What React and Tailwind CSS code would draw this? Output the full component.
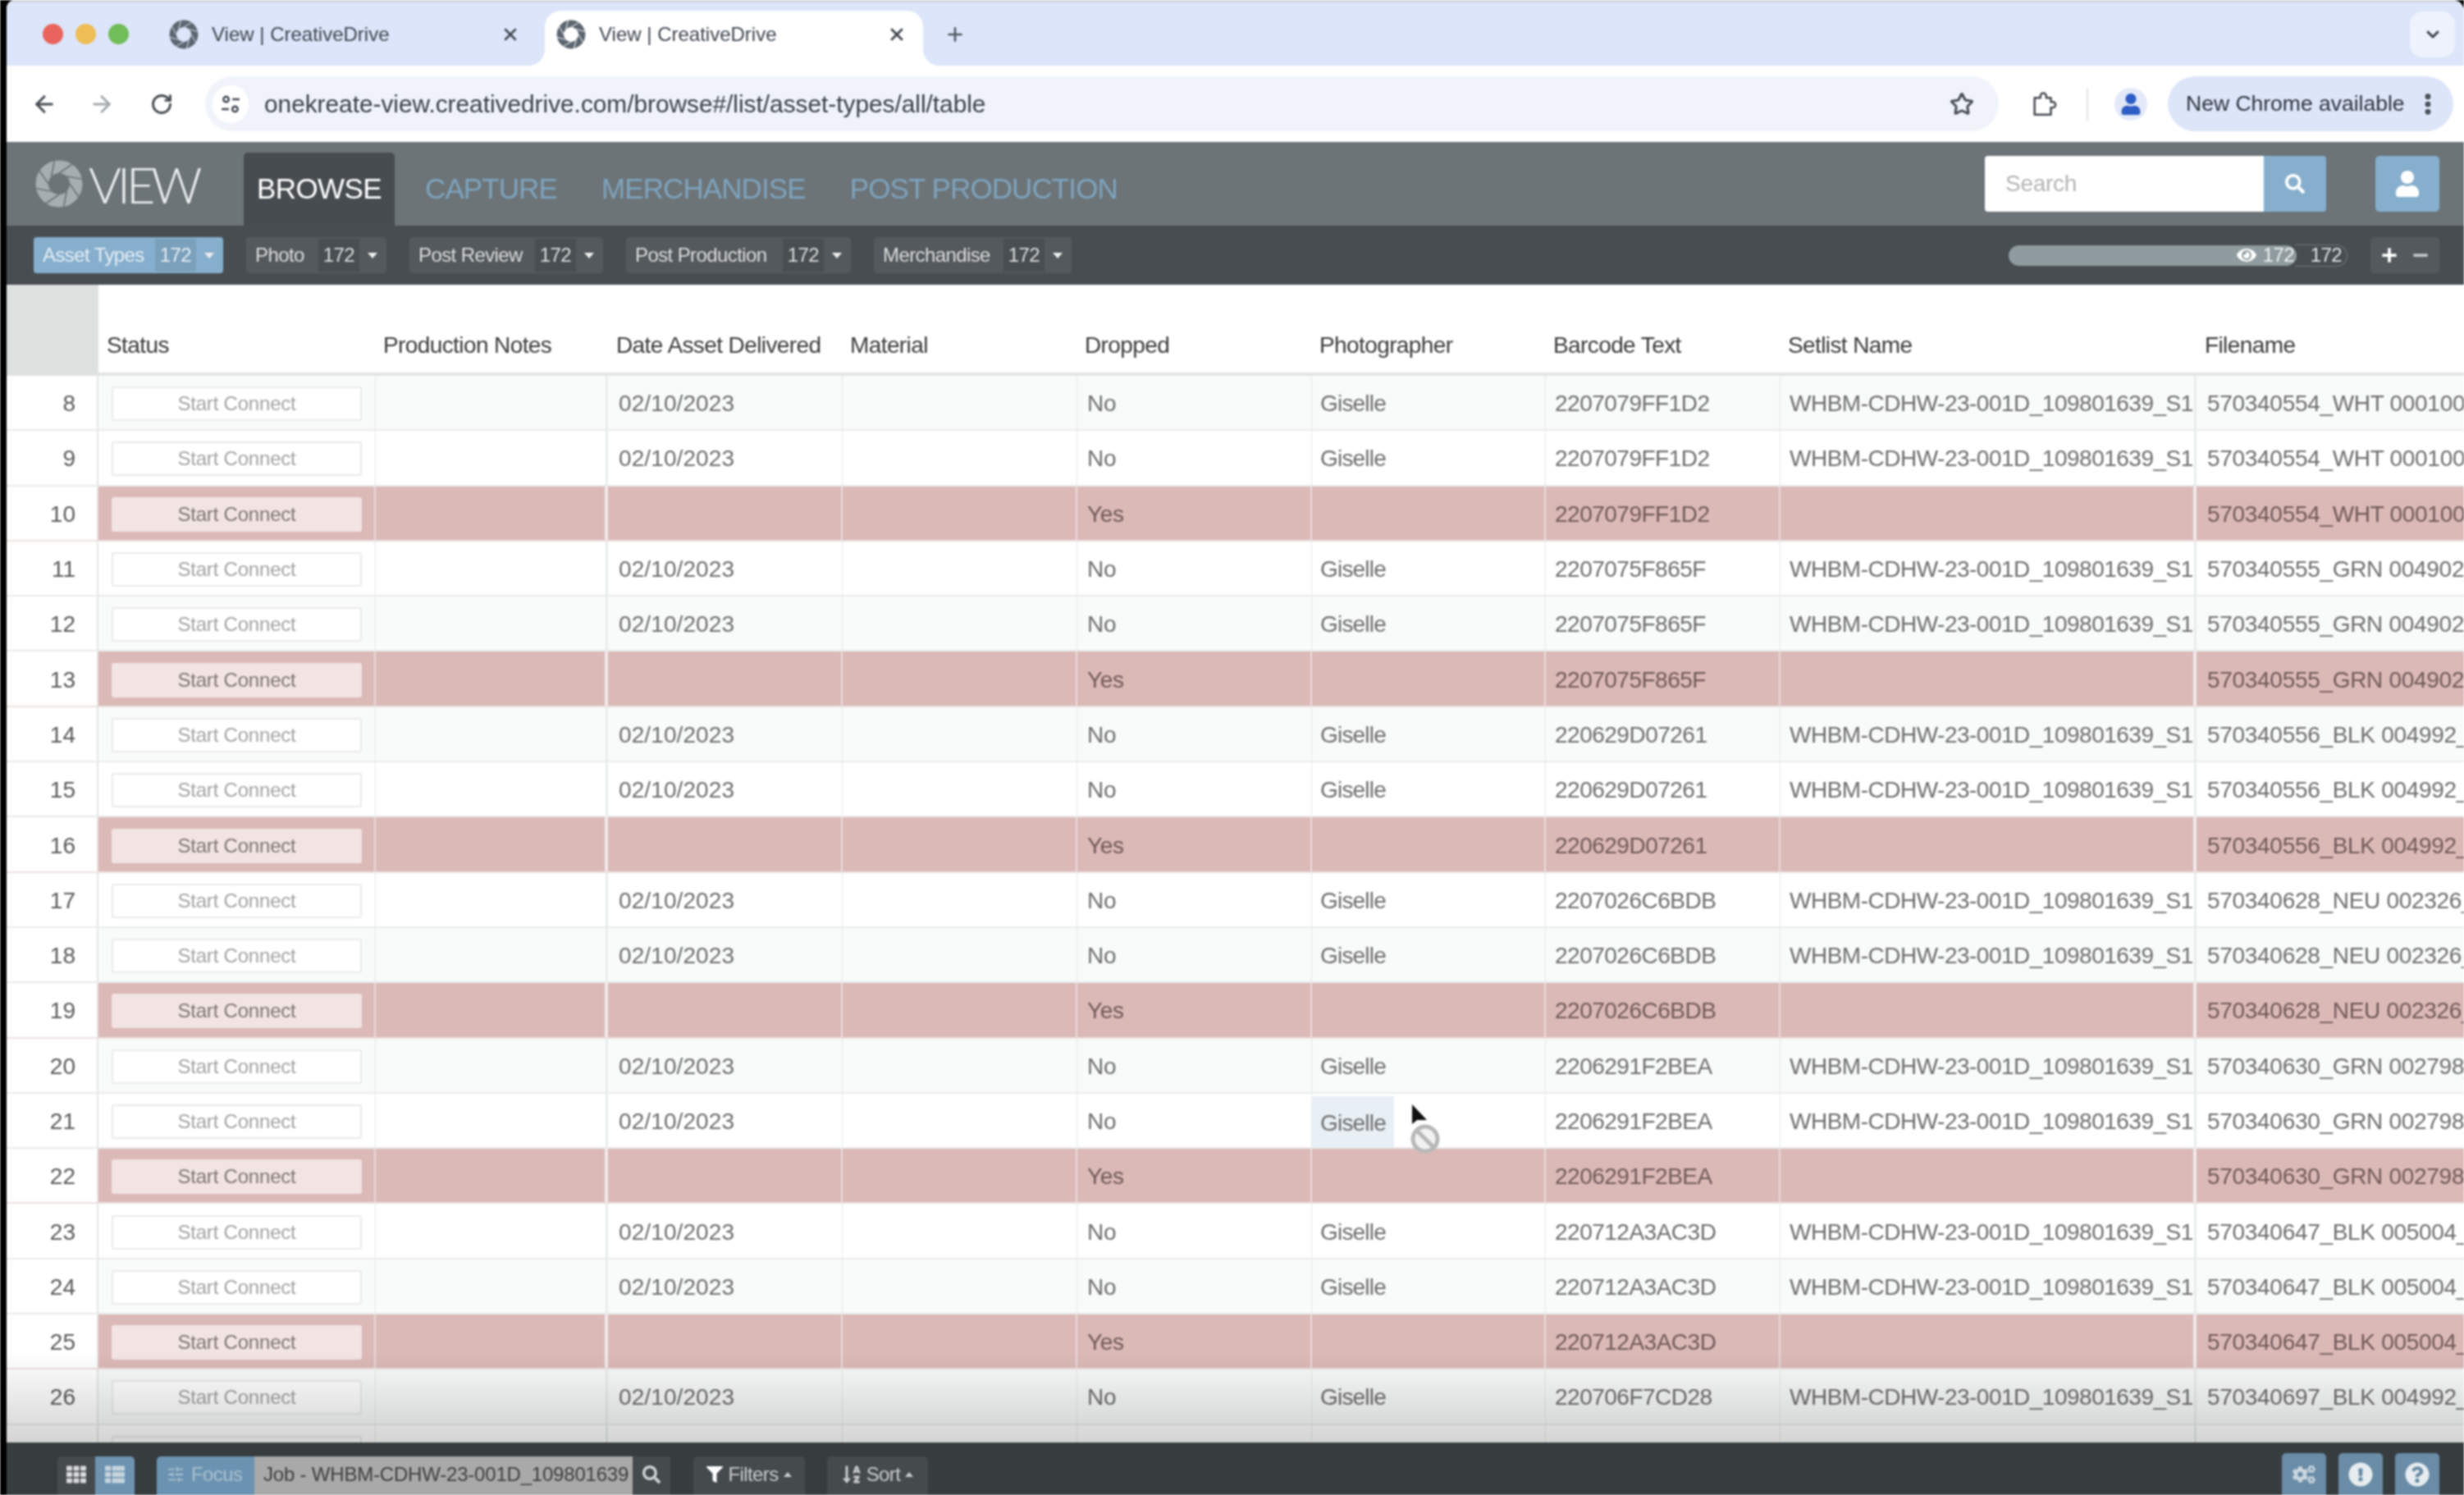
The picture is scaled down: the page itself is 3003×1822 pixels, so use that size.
import React from "react";
import { ArrowLeft, ArrowRight, RotateCw, Star, MoreVertical, ChevronDown, X, Plus, SlidersHorizontal } from "lucide-react";
import { FaUser, FaSearch, FaFilter, FaThList, FaTh, FaEye, FaSortAlphaDown, FaCogs, FaExclamationCircle, FaQuestionCircle, FaPlus, FaMinus } from "react-icons/fa";

const groups = [
  ["2207079FF1D2", "570340554_WHT 000100_"],
  ["2207075F865F", "570340555_GRN 004902_"],
  ["220629D07261", "570340556_BLK 004992_"],
  ["2207026C6BDB", "570340628_NEU 002326_"],
  ["2206291F2BEA", "570340630_GRN 002798_"],
  ["220712A3AC3D", "570340647_BLK 005004_"],
  ["220706F7CD28", "570340697_BLK 004992_"],
];
const rows = [];
for (let n = 8; n <= 27; n++) {
  const g = groups[Math.floor((n - 8) / 3)];
  rows.push({ n, red: (n - 10) % 3 === 0, code: g[0], file: g[1] });
}
const setlist = "WHBM-CDHW-23-001D_109801639_S1";
const gridCols = "grid grid-cols-[112px_338px_283px_286px_286px_286px_285px_286px_507px_326px]";

function Aperture({ size, color, line, r, sw }) {
  const blades = [0, 45, 90, 135, 180, 225, 270, 315];
  const inner = r - sw / 2;
  const outer = r + sw / 2;
  const x2 = 30 + outer * 0.55;
  const y2 = 30 - outer * 0.835;
  return (
    <svg width={size} height={size} viewBox="0 0 60 60" fill="none" className="shrink-0">
      <circle cx="30" cy="30" r={r} stroke={color} strokeWidth={sw} />
      {blades.map((a) => (
        <line key={a} x1="30" y1={30 - inner} x2={x2} y2={y2} stroke={line} strokeWidth="1.6" transform={`rotate(${a} 30 30)`} />
      ))}
    </svg>
  );
}

function Caret({ up, color = "border-t-[#e0e0e0]" }) {
  return up ? (
    <span className="w-0 h-0 border-x-[5px] border-x-transparent border-b-[6px] border-b-[#c9cccd]" />
  ) : (
    <span className={`w-0 h-0 border-x-[6px] border-x-transparent border-t-[7px] ${color}`} />
  );
}

function Chip({ label, count, w, active }) {
  return (
    <div className={`${w} h-[44px] rounded-[4px] flex items-center pl-[11px] pr-[11px] text-[24px] tracking-[-0.6px] ${active ? "bg-[#86afcd] text-[#e4eef5]" : "bg-[#53595d] text-[#dcdcdc]"}`}>
      <span className="whitespace-nowrap">{label}</span>
      <span className={`ml-auto h-[40px] px-[6px] flex items-center ${active ? "bg-[#7ba0bb]" : "bg-[#484e52]"}`}>{count}</span>
      <span className="ml-[10px] flex"><Caret color="border-t-[#eeeeee]" /></span>
    </div>
  );
}

function Cell({ children, cls = "" }) {
  return <div className={`h-full flex items-center overflow-hidden whitespace-nowrap pt-[3px] ${cls}`}>{children}</div>;
}

function Row({ r }) {
  const bg = r.red ? "bg-[#dbb9b7] text-[#705a59]" : r.n % 2 === 0 ? "bg-[#f9fafa] text-[#6e6e6e]" : "bg-white text-[#6e6e6e]";
  const line = r.red ? "border-r-[2px] border-r-[#eadcdb]" : "border-r-[1px] border-r-[#e6e8e8]";
  const thick = r.red ? "border-r-[4px] border-r-[#f3eaea]" : "border-r-[3px] border-r-[#e9eded]";
  return (
    <div className={`${gridCols} h-[67.3px] shrink-0 text-[28px] border-b-[2px] ${r.red ? "border-b-[#ebe0df]" : "border-b-[#e9ebeb]"}`}>
      <div className="h-full bg-white text-[#5a5a5a] flex items-center justify-end pr-[26px] pt-[3px] border-r-[2px] border-r-[#e3e5e5]">{r.n}</div>
      <div className={`${bg} ${line} h-full flex items-center pl-[16px] pt-[3px]`}>
        <div className={`w-[305px] h-[42px] rounded-[3px] flex items-center justify-center text-[24px] tracking-[-0.2px] ${r.red ? "bg-[#f2e4e3] text-[#7f7575]" : "bg-white border-2 border-[#e9eaea] text-[#a3a3a3]"}`}>Start Connect</div>
      </div>
      <Cell cls={`${bg} ${thick}`} />
      <Cell cls={`${bg} ${line} pl-[13px] tracking-[0.1px]`}>{r.red ? "" : "02/10/2023"}</Cell>
      <Cell cls={`${bg} ${line}`} />
      <Cell cls={`${bg} ${line} pl-[12px] tracking-[-0.3px]`}>{r.red ? "Yes" : "No"}</Cell>
      <Cell cls={`${bg} ${line} tracking-[-0.8px] ${r.n === 21 ? "pl-0 pt-0" : "pl-[10px]"}`}>
        {r.red ? "" : r.n === 21 ? <span className="bg-[#e8eff5] w-[100px] h-full flex items-center pl-[10px] pt-[3px]">Giselle</span> : "Giselle"}
      </Cell>
      <Cell cls={`${bg} ${line} pl-[11px] tracking-[-0.5px]`}>{r.code}</Cell>
      <Cell cls={`${bg} ${thick} pl-[11px] tracking-[-0.5px]`}>{r.red ? "" : setlist}</Cell>
      <Cell cls={`${bg} pl-[13px] tracking-[-0.3px]`}>{r.file}</Cell>
    </div>
  );
}

const headers = ["Status", "Production Notes", "Date Asset Delivered", "Material", "Dropped", "Photographer", "Barcode Text", "Setlist Name", "Filename"];

export default function App() {
  return (
    <div className="w-[3003px] h-[1822px] bg-black pl-[8px] overflow-hidden font-['Liberation_Sans',Arial,sans-serif] blur-[0.8px]">
      <div className="relative w-full h-full flex flex-col overflow-hidden rounded-tl-[10px] rounded-tr-[14px] bg-white">
        {/* tab strip */}
        <div className="h-[80px] shrink-0 bg-[#dce5f9] border-t-[3px] border-t-[#d3d6db] flex items-center pl-[44px]">
          <div className="flex gap-[15px] w-[132px] shrink-0">
            <span className="w-[25px] h-[25px] rounded-full bg-[#e9645c]" />
            <span className="w-[25px] h-[25px] rounded-full bg-[#eebd55]" />
            <span className="w-[25px] h-[25px] rounded-full bg-[#71bd58]" />
          </div>
          <div className="flex items-center h-full w-[480px] shrink-0 pl-[22px]">
            <Aperture size={36} color="#5c6670" line="#dce5f9" r={22} sw={14} />
            <span className="ml-[16px] text-[24px] text-[#3f4650] whitespace-nowrap">View | CreativeDrive</span>
            <X className="ml-auto mr-[30px] text-[#40464e]" size={24} strokeWidth={2.5} />
          </div>
          <div className="relative self-end h-[67px] w-[461px] shrink-0 bg-white rounded-t-[20px] pl-[14px] pb-[10px] flex items-center">
            <Aperture size={36} color="#5c6670" line="#ffffff" r={22} sw={14} />
            <span className="ml-[16px] text-[24px] text-[#3f4650] whitespace-nowrap">View | CreativeDrive</span>
            <X className="ml-[134px] text-[#40464e]" size={24} strokeWidth={2.8} />
            <span className="absolute left-[-20px] bottom-0 w-[20px] h-[20px] bg-white"><span className="block w-full h-full bg-[#dce5f9] rounded-br-[20px]" /></span>
            <span className="absolute right-[-20px] bottom-0 w-[20px] h-[20px] bg-white"><span className="block w-full h-full bg-[#dce5f9] rounded-bl-[20px]" /></span>
          </div>
          <Plus className="ml-[26px] text-[#505863]" size={26} strokeWidth={2.4} />
          <div className="ml-auto mr-[11px] w-[55px] h-[56px] rounded-[16px] bg-[#eef2fc] flex items-center justify-center">
            <ChevronDown size={24} strokeWidth={3} className="text-[#3c434c]" />
          </div>
        </div>
        {/* toolbar */}
        <div className="h-[93px] shrink-0 bg-white flex items-center pl-[30px]">
          <ArrowLeft size={32} className="text-[#474c52] shrink-0" strokeWidth={2.2} />
          <ArrowRight size={32} className="ml-[38px] text-[#a5a9ad] shrink-0" strokeWidth={2.2} />
          <RotateCw size={28} className="ml-[43px] text-[#474c52] shrink-0" strokeWidth={2.4} />
          <div className="ml-[39px] w-[2186px] h-[67px] rounded-full bg-[#f0f4fa] flex items-center shrink-0 pl-[9px]">
            <div className="w-[44px] h-[46px] rounded-full bg-white flex items-center justify-center">
              <svg width="26" height="26" viewBox="0 0 24 24" fill="none" stroke="#3f4650" strokeWidth="2.2">
                <circle cx="7" cy="6.5" r="3" /><line x1="14" y1="6.5" x2="22" y2="6.5" />
                <circle cx="17" cy="17.5" r="3" /><line x1="2" y1="17.5" x2="10" y2="17.5" />
              </svg>
            </div>
            <span className="ml-[19px] mt-[1px] text-[29.8px] text-[#3a4149] whitespace-nowrap">onekreate-view.creativedrive.com/browse#/list/asset-types/all/table</span>
            <Star size={30} strokeWidth={2.4} className="ml-auto mr-[30px] text-[#474c52]" />
          </div>
          <svg width="34" height="34" viewBox="0 0 24 24" fill="none" stroke="#474c52" strokeWidth="1.8" strokeLinejoin="round" className="ml-[38px] shrink-0">
            <path d="M4 6.5 H9 V5 a2.5 2.5 0 0 1 5 0 V6.5 H18 V10 H19.5 a2.5 2.5 0 0 1 0 5 H18 V21 H4 Z" />
          </svg>
          <span className="ml-[35px] w-[2px] h-[40px] bg-[#dfe3ea] shrink-0" />
          <div className="ml-[32px] w-[40px] h-[40px] rounded-full bg-[#e3e9f8] flex items-center justify-center shrink-0">
            <FaUser size={26} className="text-[#2c5cc5]" />
          </div>
          <div className="ml-[25px] w-[348px] h-[67px] rounded-full bg-[#dde5f8] flex items-center pl-[22px] shrink-0">
            <span className="text-[26.5px] text-[#2c3440] whitespace-nowrap">New Chrome available</span>
            <MoreVertical size={32} strokeWidth={3} className="ml-[12px] text-[#3c434c]" />
          </div>
        </div>
        {/* nav */}
        <div className="h-[102px] shrink-0 bg-[#6c7478] flex items-end pl-[32px] relative">
          <div className="self-center flex items-center w-[257px]">
            <Aperture size={64} color="#a7aeb1" line="#6c7478" r={19.5} sw={14.5} />
            <span className="ml-[4px] text-[61px] leading-none text-[#eef0f1] font-['Lato',sans-serif] font-light tracking-[-5px]">VIEW</span>
          </div>
          <div className="w-[184px] h-[89px] bg-[#464c50] rounded-t-[5px] flex items-center justify-center text-[35px] text-white tracking-[-0.6px]">BROWSE</div>
          <div className="h-[89px] flex items-center text-[35px] text-[#7ea3bd] tracking-[-0.9px] ml-[37px] gap-[54px]">
            <span>CAPTURE</span>
            <span>MERCHANDISE</span>
            <span>POST PRODUCTION</span>
          </div>
          <div className="ml-auto self-start mt-[17px] flex">
            <div className="w-[340px] h-[68px] bg-white rounded-l-[4px] flex items-center pl-[25px] text-[28px] tracking-[-0.3px] text-[#b4b4b4]">Search</div>
            <div className="w-[76px] h-[68px] bg-[#86afcd] rounded-r-[4px] flex items-center justify-center"><FaSearch size={24} className="text-white" /></div>
            <div className="ml-[60px] mr-[30px] w-[78px] h-[68px] bg-[#86afcd] rounded-[5px] flex items-center justify-center"><FaUser size={32} className="text-white" /></div>
          </div>
        </div>
        {/* filter bar */}
        <div className="h-[72px] shrink-0 bg-[#474d51] flex items-center pl-[33px] gap-[28px] relative">
          <Chip label="Asset Types" count="172" w="w-[231px]" active />
          <Chip label="Photo" count="172" w="w-[171px]" />
          <Chip label="Post Review" count="172" w="w-[236px]" />
          <Chip label="Post Production" count="172" w="w-[274px]" />
          <Chip label="Merchandise" count="172" w="w-[241px]" />
          <div className="ml-auto flex items-center mr-[30px]">
            <div className="w-[351px] h-[25px] rounded-full bg-[#8f9b9f] flex items-center justify-end pr-[3px] text-[24px] text-[#eef0f0] tracking-[-0.6px]">
              <FaEye size={24} className="mr-[8px] text-white" />172
            </div>
            <div className="w-[64px] h-[27px] -ml-[2px] rounded-r-full border-r border-y border-[#6f767a] flex items-center justify-end pr-[6px] text-[24px] text-[#dfe2e3] tracking-[-0.6px]">172</div>
            <div className="ml-[28px] w-[84px] h-[44px] bg-[#53595d] rounded-[4px] flex items-center justify-center gap-[18px] text-white">
              <FaPlus size={20} /><FaMinus size={20} className="text-[#c3c6c8]" />
            </div>
          </div>
        </div>
        {/* table */}
        <div className="flex-1 min-h-0 overflow-hidden relative flex flex-col bg-white">
          <div className={`${gridCols} h-[111px] shrink-0 text-[28px] text-[#3c3c3c] tracking-[-0.6px]`}>
            <div className="bg-[#dfe1e1] h-full" />
            {headers.map((h, i) => (
              <div key={h} className={`h-full border-b-[4px] border-b-[#e3e5e5] flex items-end pb-[12px] whitespace-nowrap ${i === 0 || i === 8 || i === 2 ? "pl-[10px]" : "pl-[9px]"}`}>{h}</div>
            ))}
          </div>
          {rows.map((r) => <Row key={r.n} r={r} />)}
          <div className="absolute left-0 right-0 bottom-0 h-[110px] pointer-events-none bg-[linear-gradient(to_bottom,rgba(0,0,0,0),rgba(0,0,0,0.17))]" />
          {/* cursor */}
          <svg className="absolute left-[1700px] top-[990px] pointer-events-none" width="70" height="70" viewBox="0 0 70 70" fill="none">
            <path d="M13 9 L13 33 L19 28 L31 28 Z" fill="#111111" />
            <circle cx="29" cy="51" r="15" fill="#f2f2f2" stroke="#b8b8b8" strokeWidth="5" />
            <line x1="20" y1="42" x2="38" y2="60" stroke="#b8b8b8" strokeWidth="5" />
          </svg>
        </div>
        {/* bottom bar */}
        <div className="h-[64px] shrink-0 bg-[#373c3f] flex items-end pl-[62px] text-[24px] tracking-[-0.6px] relative">
          <div className="flex h-[47px] rounded-t-[5px] overflow-hidden">
            <div className="w-[46px] pb-[3px] bg-[#454a4d] flex items-center justify-center text-[#d9d9d9]"><FaTh size={24} /></div>
            <div className="w-[48px] pb-[3px] bg-[#6d93b0] flex items-center justify-center text-[#c6d4de]"><FaThList size={24} /></div>
          </div>
          <div className="ml-[27px] flex h-[47px] rounded-tl-[5px] overflow-hidden">
            <div className="w-[119px] pb-[3px] bg-[#6b93b1] flex items-center pl-[12px] gap-[8px] text-[#a9c0d0]"><SlidersHorizontal size={22} />Focus</div>
            <div className="w-[461px] pb-[3px] bg-[#a9a9a9] flex items-center pl-[11px] text-[#3f3f3f] tracking-[-0.2px] whitespace-nowrap overflow-hidden">Job - WHBM-CDHW-23-001D_109801639</div>
            <div className="w-[46px] pb-[3px] bg-[#454a4d] flex items-center justify-center text-[#d0d3d4]"><FaSearch size={22} /></div>
          </div>
          <div className="ml-[28px] w-[136px] h-[47px] pb-[3px] bg-[#454a4d] rounded-t-[5px] flex items-center justify-center gap-[6px] text-[#c9cccd]"><FaFilter size={20} className="text-white" />Filters<Caret up /></div>
          <div className="ml-[27px] w-[123px] h-[47px] pb-[3px] bg-[#454a4d] rounded-t-[5px] flex items-center justify-center gap-[6px] text-[#c9cccd]"><FaSortAlphaDown size={24} />Sort<Caret up /></div>
          <div className="ml-auto mr-[30px] flex gap-[15px]">
            <div className="w-[54px] h-[51px] bg-[#6a8ca6] rounded-t-[5px] flex items-center justify-center text-[#c9d6df]"><FaCogs size={28} /></div>
            <div className="w-[54px] h-[51px] bg-[#6a8ca6] rounded-t-[5px] flex items-center justify-center text-[#e6ecef]"><FaExclamationCircle size={30} /></div>
            <div className="w-[54px] h-[51px] bg-[#6a8ca6] rounded-t-[5px] flex items-center justify-center text-[#e6ecef]"><FaQuestionCircle size={30} /></div>
          </div>
        </div>
      </div>
    </div>
  );
}
